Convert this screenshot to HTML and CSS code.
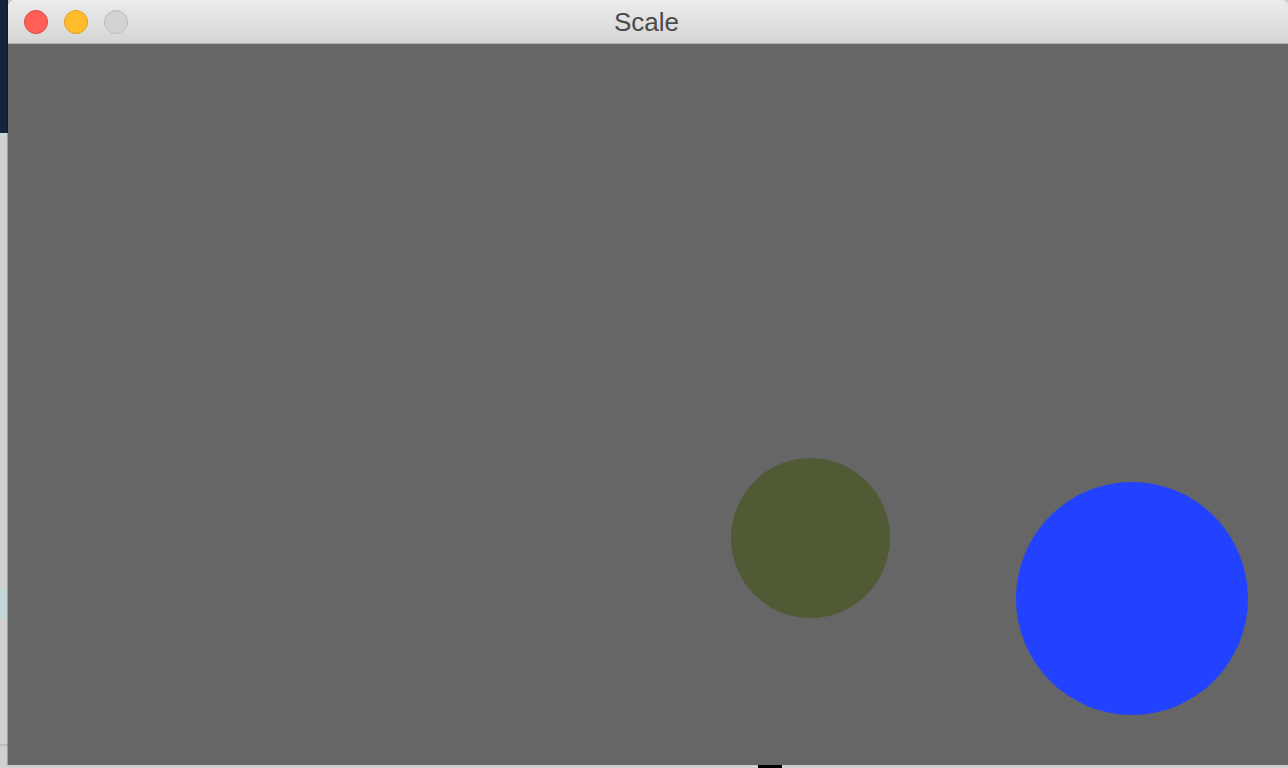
FILE: index.html
```html
<!DOCTYPE html>
<html>
<head>
<meta charset="utf-8">
<title>Scale</title>
<link rel="stylesheet" href="styles.css">
</head>
<body>
<div class="desktop">
  <div class="desk-top"></div>
  <div class="desk-band"></div>
  <div class="desk-line"></div>
  <div class="dock-item"></div>
  <div class="window">
    <div class="titlebar">
      <div class="lights">
        <span class="light red"></span>
        <span class="light yellow"></span>
        <span class="light gray"></span>
      </div>
      <div class="title">Scale</div>
    </div>
    <div class="canvas">
      <div class="ball olive"></div>
      <div class="ball blue"></div>
    </div>
  </div>
</div>
</body>
</html>
```

FILE: styles.css
```css
html, body {
  margin: 0;
  padding: 0;
  width: 1288px;
  height: 768px;
  overflow: hidden;
}
.desktop {
  position: relative;
  width: 1288px;
  height: 768px;
  background: #d0d0d0;
  font-family: "Liberation Sans", Arial, sans-serif;
}
.desk-top {
  position: absolute;
  left: 0;
  top: 0;
  width: 8px;
  height: 133px;
  background: #13253a;
  border-bottom: 2px solid #bfe0dc;
}
.desk-band {
  position: absolute;
  left: 0;
  top: 587px;
  width: 8px;
  height: 31px;
  background: #c3d6d6;
}
.desk-line {
  position: absolute;
  left: 0;
  top: 744px;
  width: 8px;
  height: 2px;
  background: #bcbcbc;
}
.dock-item {
  position: absolute;
  left: 758px;
  top: 764px;
  width: 24px;
  height: 4px;
  background: #000;
}
.window {
  position: absolute;
  left: 8px;
  top: 0;
  width: 1280px;
  height: 765px;
  display: flex;
  flex-direction: column;
  border-radius: 6px 6px 0 0;
  overflow: hidden;
  box-shadow: -1px 0 1px rgba(0,0,0,0.25);
}
.titlebar {
  position: relative;
  height: 43px;
  flex: none;
  background: linear-gradient(#ececec, #d5d5d5);
  border-bottom: 1px solid #b1b1b1;
  display: flex;
  align-items: center;
  justify-content: center;
}
.lights {
  position: absolute;
  left: 16px;
  top: 10px;
  display: flex;
  gap: 16px;
}
.light {
  width: 24px;
  height: 24px;
  border-radius: 50%;
  box-sizing: border-box;
}
.red { background: #ff5f57; border: 1px solid #e2463f; }
.yellow { background: #ffbd2e; border: 1px solid #e1a116; }
.gray { background: #d3d3d3; border: 1px solid #bcbcbc; }
.title {
  font-size: 26px;
  color: #4a4a4a;
  margin-top: 1px;
  margin-right: 3px;
}
.canvas {
  position: relative;
  flex: 1;
  background: #666666;
}
.ball {
  position: absolute;
  border-radius: 50%;
}
.olive {
  left: 723px;
  top: 414px;
  width: 159px;
  height: 160px;
  background: #505a34;
}
.blue {
  left: 1008px;
  top: 438px;
  width: 232px;
  height: 233px;
  background: #2342ff;
}
```
